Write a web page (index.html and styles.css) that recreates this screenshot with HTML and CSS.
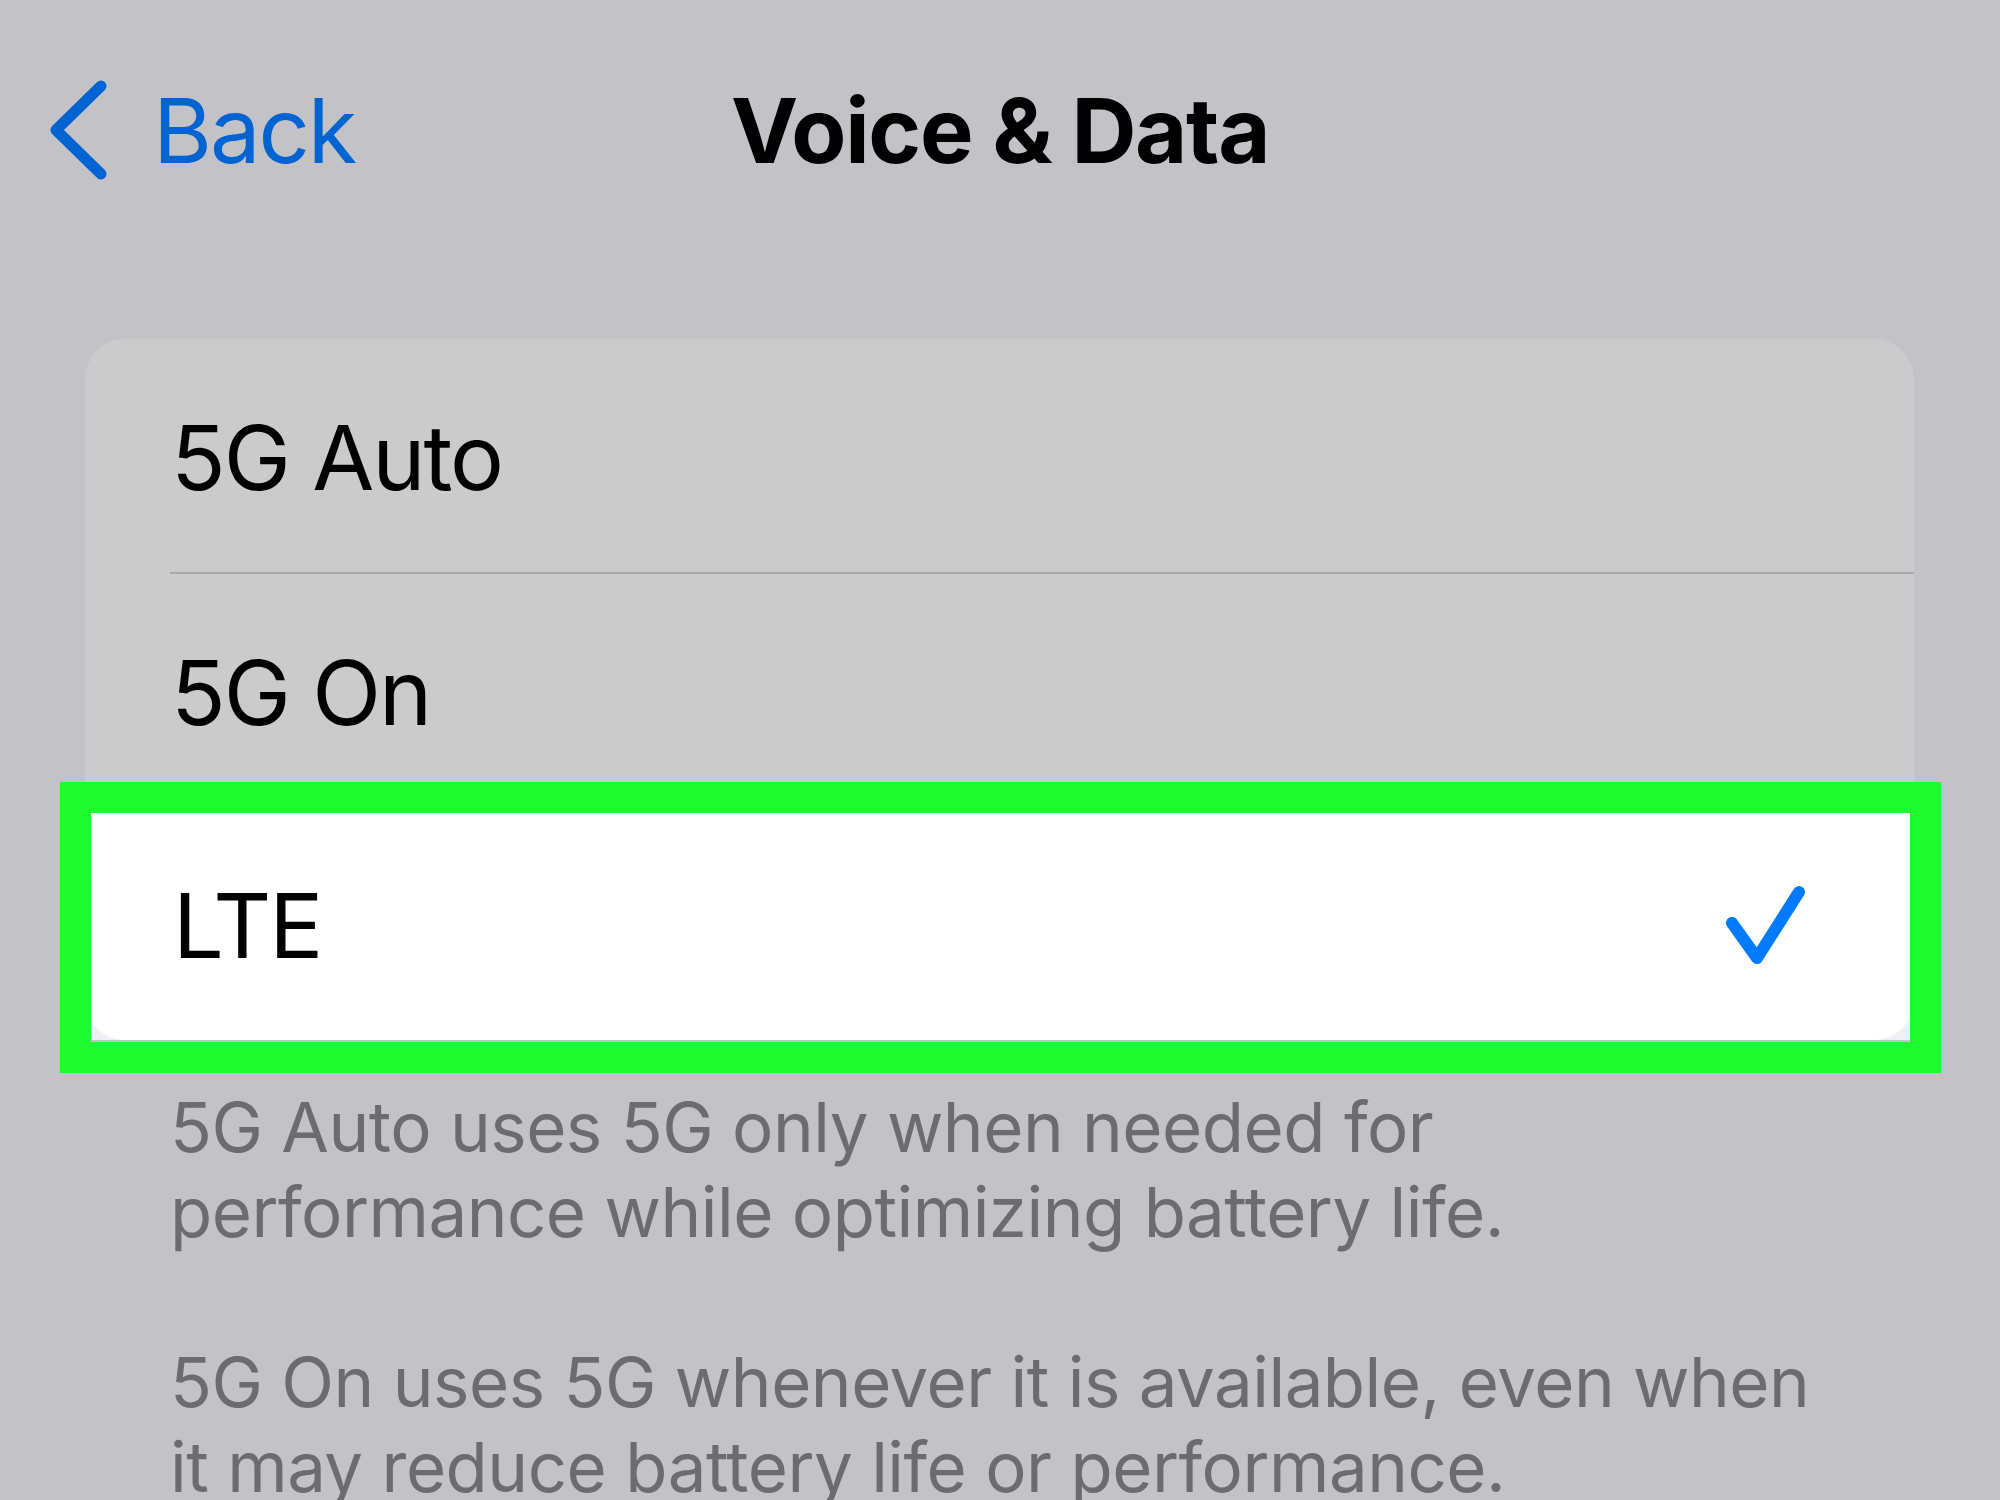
FILE: index.html
```html
<!DOCTYPE html>
<html lang="en">

<head>
  <meta charset="UTF-8">
  <title>Voice &amp; Data</title>
  <link rel="stylesheet" href="styles.css">
</head>

<body>
  <!-- Top bar -->
  <div class="topbar">
    <a href="#" class="back">
      <svg class="chevron" width="70" height="115" viewBox="0 0 70 115">
        <polyline points="57,13 12,57 57,101" />
      </svg>
      <span>Back</span>
    </a>
    <h1 class="title">Voice &amp; Data</h1>
    <div></div>
  </div>

  <!-- Options -->
  <div class="options">
    <div class="option">5G Auto</div>
    <div class="divider"></div>
    <div class="option">5G On</div>
    <div class="option selected">
      <div class="option-body">
        <span>LTE</span>
        <svg class="check" width="90" height="90" viewBox="0 0 90 90">
          <polyline points="11,42 36,77 78,11" />
        </svg>
      </div>
    </div>
  </div>

  <div class="footnote">
    <p>5G Auto uses 5G only when needed for<br>performance while optimizing battery life.</p>
    <p>5G On uses 5G whenever it is available, even when<br>it may reduce battery life or performance.</p>
  </div>
</body>

</html>
```

FILE: styles.css
```css
/* page */
body {
  margin: 0;
  padding: 0;
  background-color: #c3c2c7;
  font-family: Inter, "Noto Sans", sans-serif;
  color: #000;
}

.topbar {
  display: grid;
  grid-template-columns: 1fr auto 1fr;
  align-items: center;
  padding-top: 73px;
  height: 108px;
}

.back {
  display: flex;
  align-items: center;
  margin-left: 44px;
  color: #0064d3;
  text-decoration: none;
  font-size: 90px;
  line-height: 108px;
  letter-spacing: -2px;
}

.back span {
  margin-left: 39px;
}

.chevron polyline {
  fill: none;
  stroke: #0064d3;
  stroke-width: 11;
  stroke-linecap: round;
  stroke-linejoin: round;
}

.title {
  margin: 0;
  font-size: 90px;
  line-height: 108px;
  font-weight: 700;
  letter-spacing: -1.3px;
}

.options {
  margin: 158px 86px 0 85px;
  background-color: #cbcbcb;
  border-radius: 40px;
}

.option {
  height: 233px;
  padding: 4px 0 0 86px;
  box-sizing: border-box;
  display: flex;
  align-items: center;
  font-size: 90px;
  letter-spacing: -2px;
}

.divider {
  height: 2px;
  margin-left: 85px;
  background-color: #a9a9ab;
}

.option.selected {
  position: relative;
  padding: 0;
  background-color: #f0eff5;
}

/* green highlight frame */
.option.selected::after {
  content: "";
  position: absolute;
  left: -25px;
  top: -25px;
  right: -27px;
  bottom: -33px;
  border: 31px solid #1ffa2f;
}

.option-body {
  flex: 1;
  height: 100%;
  display: flex;
  align-items: center;
  justify-content: space-between;
  padding: 4px 103px 0 88px;
  box-sizing: border-box;
  background-color: #fff;
  border-radius: 0 0 40px 40px;
}

.check polyline {
  fill: none;
  stroke: #007aff;
  stroke-width: 12;
  stroke-linecap: round;
  stroke-linejoin: round;
}

.footnote {
  margin: 45px 0 0 170px;
  color: #6c6c70;
  font-size: 69px;
  line-height: 85px;
  letter-spacing: -0.5px;
}

.footnote p {
  margin: 0 0 85px;
}

.footnote p:last-child {
  margin-bottom: 0;
}
```
